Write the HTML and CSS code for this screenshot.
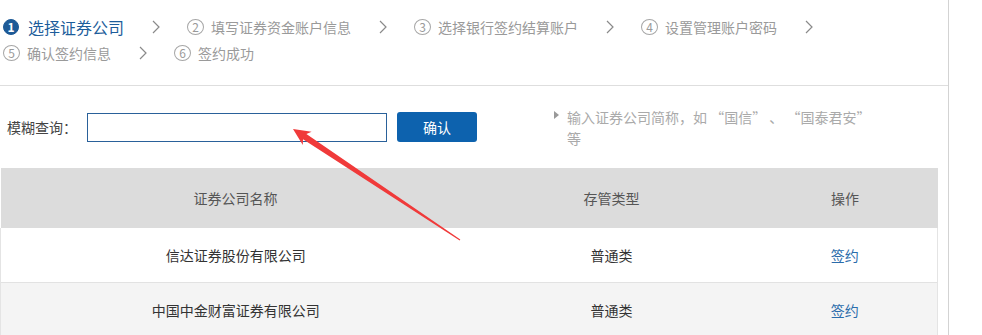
FILE: index.html
```html
<!doctype html>
<html>
<head>
  <meta charset="utf-8">
  <title>选择证券公司</title>
  <link rel="stylesheet" href="styles.css">
</head>
<body>
  <div class="main">
    <ul class="steps">
      <li class="step active"><span class="num">1</span>选择证券公司</li>
      <li class="sep"><svg width="8" height="14" viewBox="0 0 8 14"><polyline points="1,1 7,7 1,13" /></svg></li>
      <li class="step"><span class="num">2</span>填写证券资金账户信息</li>
      <li class="sep"><svg width="8" height="14" viewBox="0 0 8 14"><polyline points="1,1 7,7 1,13" /></svg></li>
      <li class="step"><span class="num">3</span>选择银行签约结算账户</li>
      <li class="sep"><svg width="8" height="14" viewBox="0 0 8 14"><polyline points="1,1 7,7 1,13" /></svg></li>
      <li class="step"><span class="num">4</span>设置管理账户密码</li>
      <li class="sep"><svg width="8" height="14" viewBox="0 0 8 14"><polyline points="1,1 7,7 1,13" /></svg></li>
      <li class="step"><span class="num">5</span>确认签约信息</li>
      <li class="sep"><svg width="8" height="14" viewBox="0 0 8 14"><polyline points="1,1 7,7 1,13" /></svg></li>
      <li class="step"><span class="num">6</span>签约成功</li>
    </ul>

    <div class="search">
      <label class="search-label">模糊查询：</label>
      <input class="search-input" type="text">
      <a class="btn" href="#">确认</a>
      <p class="hint">输入证券公司简称，如 “国信” 、 “国泰君安” 等</p>
    </div>

    <table class="list">
      <thead>
        <tr>
          <th class="col-name">证券公司名称</th>
          <th class="col-type">存管类型</th>
          <th class="col-op">操作</th>
        </tr>
      </thead>
      <tbody>
        <tr>
          <td>信达证券股份有限公司</td>
          <td>普通类</td>
          <td><a href="#">签约</a></td>
        </tr>
        <tr>
          <td>中国中金财富证券有限公司</td>
          <td>普通类</td>
          <td><a href="#">签约</a></td>
        </tr>
      </tbody>
    </table>

    <svg class="mark" width="982" height="335" viewBox="0 0 982 335">
      <polygon points="293,129 311.6,131.7 306.4,134.1 460.3,239.6 459.7,240.4 303,139.3 302.8,145.1" />
    </svg>
  </div>
</body>
</html>
```

FILE: styles.css
```css
html, body {
  margin: 0;
  padding: 0;
  background-color: #fff;
}
body {
  font-family: "Noto Sans CJK SC", "Liberation Sans", sans-serif;
  font-size: 14px;
  color: #333;
}
.main {
  position: relative;
  width: 948px;
  min-height: 335px;
  border-right: 1px solid #d3d3d3;
}

/* steps */
.steps {
  display: flex;
  flex-wrap: wrap;
  margin: 0;
  padding: 14px 45px 19px 3px;
  list-style: none;
  border-bottom: 1px solid #dedede;
}
.step {
  display: flex;
  align-items: center;
  height: 26px;
  color: #9a9a9a;
  font-size: 14px;
}
.step .num {
  display: inline-block;
  box-sizing: border-box;
  width: 17px;
  height: 16px;
  margin-right: 7px;
  border: 1px solid #a6a6a6;
  border-radius: 50%;
  font-size: 12px;
  line-height: 14px;
  text-align: center;
  color: #9a9a9a;
}
.step.active {
  color: #1d5d9b;
  font-size: 16px;
}
.step.active .num {
  width: 16px;
  margin-right: 9px;
  border-color: #1d5a97;
  background-color: #1d5a97;
  color: #fff;
  font-weight: bold;
}
.sep {
  display: flex;
  align-items: center;
  height: 26px;
  margin: 0 27px 0 28px;
}
.sep polyline {
  fill: none;
  stroke: #8a8a8a;
  stroke-width: 1.2;
}

/* search */
.search {
  display: flex;
  align-items: flex-start;
  box-sizing: border-box;
  height: 82px;
  padding-top: 21px;
}
.search-label {
  margin: 6px 0 0 7px;
  width: 80px;
  line-height: 29px;
  color: #444;
}
.search-input {
  box-sizing: border-box;
  width: 300px;
  height: 29px;
  margin: 6px 0 0;
  padding: 0 6px;
  border: 1px solid #2a619a;
  border-radius: 0;
  outline: none;
}
.btn {
  display: inline-block;
  width: 80px;
  height: 30px;
  margin: 5px 0 0 10px;
  border-radius: 3px;
  background-color: #0d62ae;
  color: #fff;
  font-size: 14px;
  line-height: 30px;
  text-align: center;
  text-decoration: none;
}
.hint {
  position: relative;
  width: 304px;
  margin: 0 0 0 90px;
  color: #aaa;
  line-height: 21px;
}
.hint::before {
  content: "";
  position: absolute;
  left: -13px;
  top: 4px;
  border-top: 4px solid transparent;
  border-bottom: 4px solid transparent;
  border-left: 5px solid #999;
}

/* table */
.list {
  width: 938px;
  border-collapse: collapse;
  table-layout: fixed;
}
.list th {
  height: 60px;
  padding: 0;
  background-color: #dcdcdc;
  color: #555;
  font-weight: normal;
}
.list .col-name { width: 470px; }
.list .col-type { width: 282px; }
.list td {
  height: 54px;
  padding: 0;
  text-align: center;
  color: #333;
}
.list tbody tr {
  border-left: 1px solid #e4e4e4;
  border-right: 1px solid #e4e4e4;
}
.list tbody tr:nth-child(2n) {
  background-color: #f4f4f4;
  border-top: 1px solid #e2e2e2;
}
.list td a {
  color: #2b6cab;
  text-decoration: none;
}

/* annotation */
.mark {
  position: absolute;
  left: 0;
  top: 0;
  pointer-events: none;
}
.mark polygon {
  fill: #f03a3a;
}
```
